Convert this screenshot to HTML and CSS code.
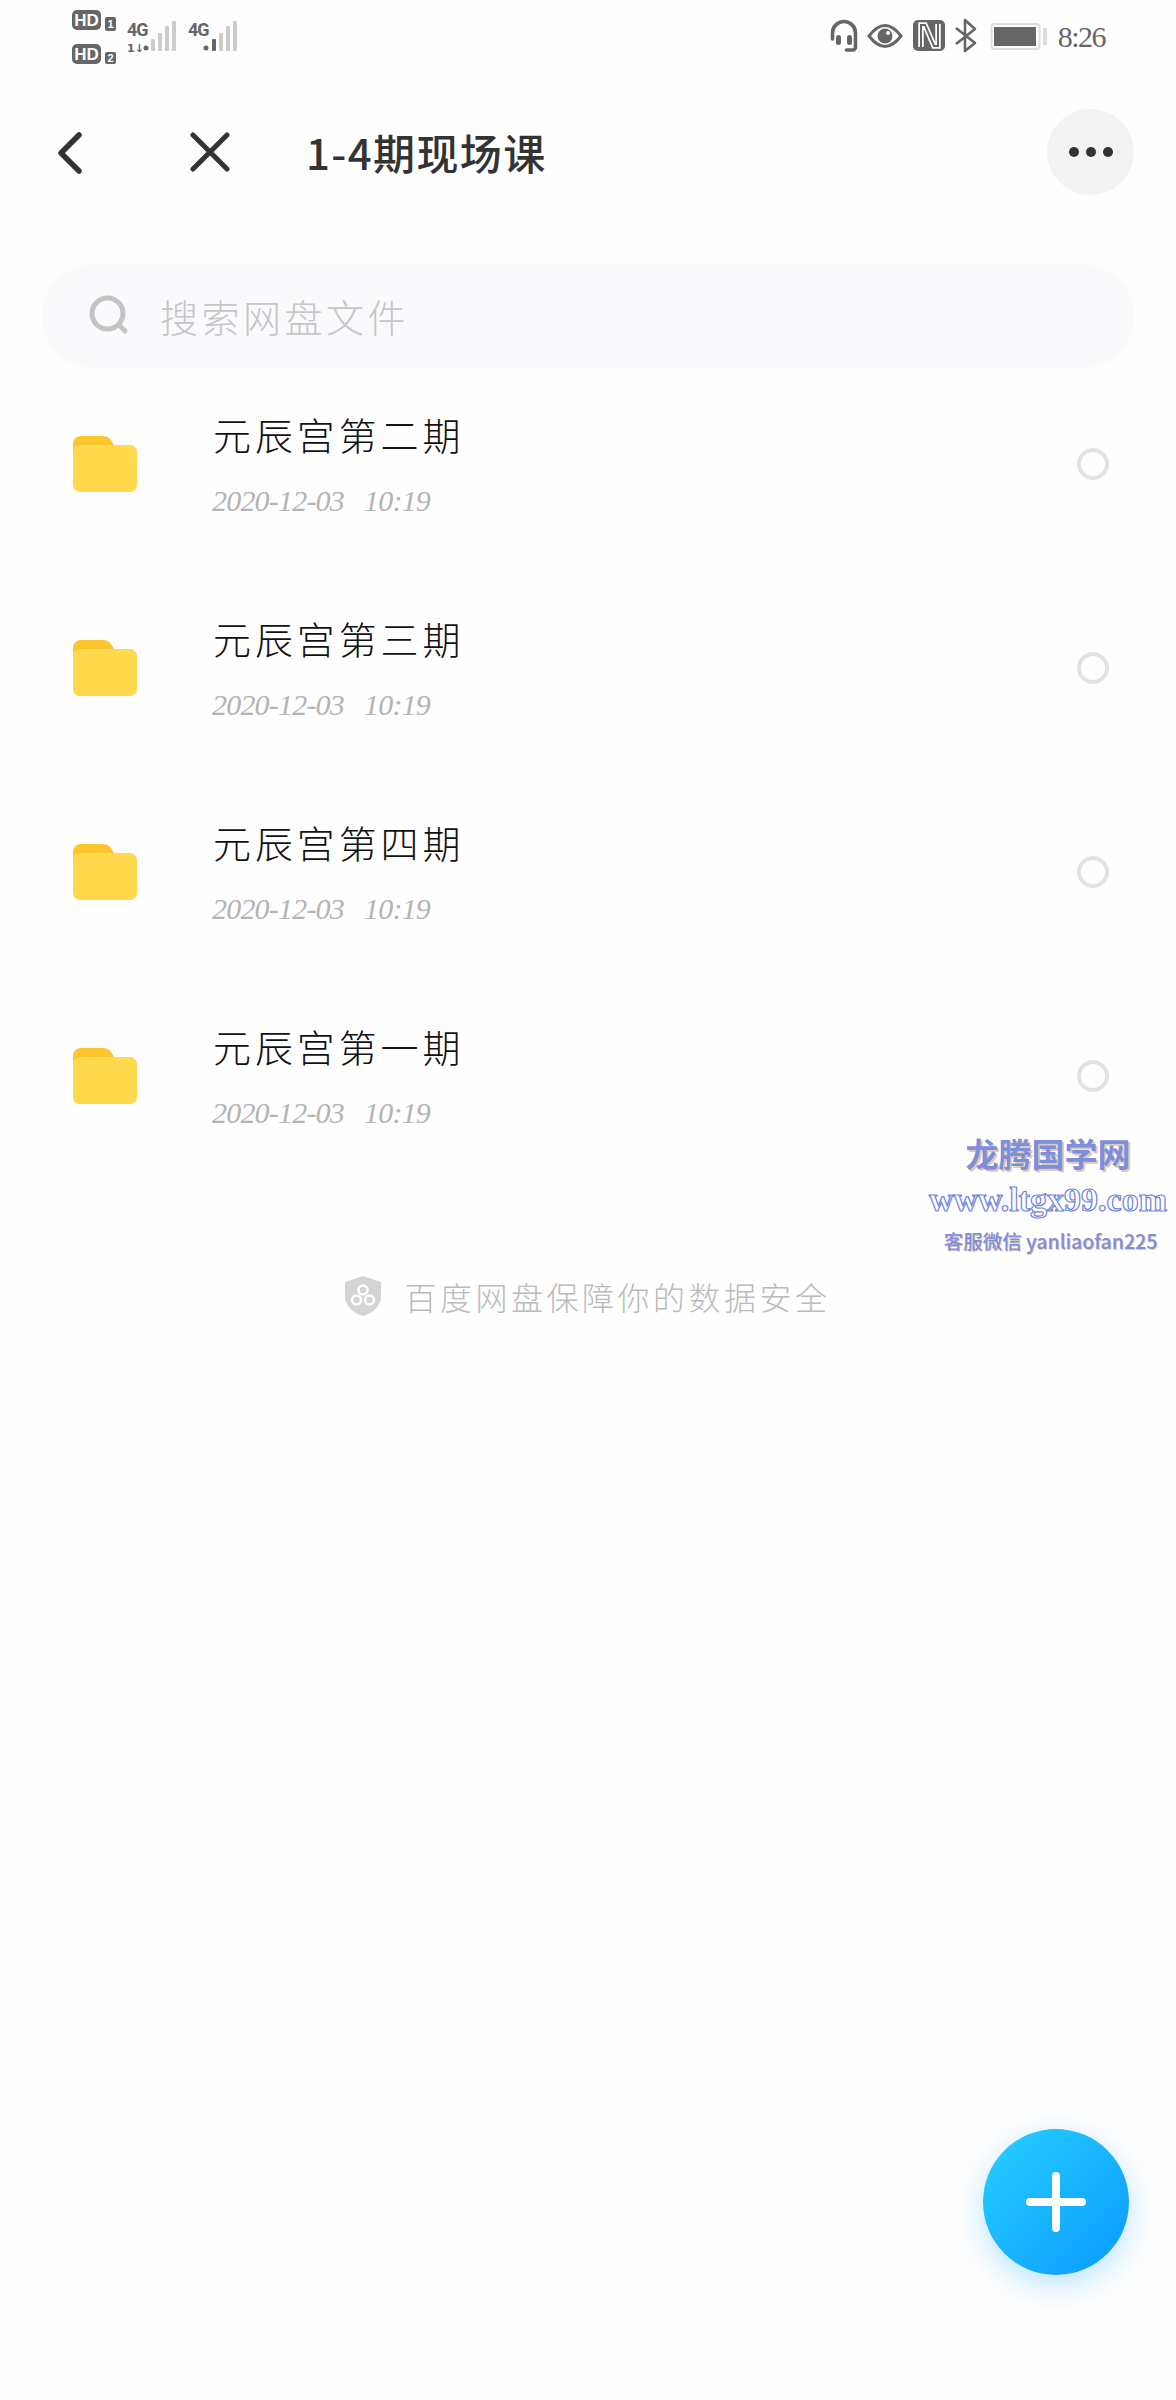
FILE: index.html
```html
<!DOCTYPE html>
<html lang="zh-CN">
<head>
<meta charset="utf-8">
<title>1-4期现场课</title>
<link rel="stylesheet" href="styles.css">
</head>
<body>
<div class="page">
  <header class="status">
    <svg class="status-left" width="170" height="70" viewBox="72 0 170 70">
      <rect x="72" y="10" width="29" height="20" rx="5" fill="#666"/>
      <text x="86.5" y="26" class="hd">HD</text>
      <rect x="105" y="17" width="11" height="14" rx="2" fill="#666"/>
      <text x="110.5" y="28" class="sim">1</text>
      <rect x="72" y="44" width="29" height="20" rx="5" fill="#666"/>
      <text x="86.5" y="60" class="hd">HD</text>
      <rect x="105" y="52" width="11" height="12" rx="2" fill="#666"/>
      <text x="110.5" y="62" class="sim">2</text>
      <text x="127" y="36" class="net">4G</text>
      <text x="127" y="52" class="arrows">1↓</text>
      <circle cx="146" cy="48" r="2.5" fill="#666"/>
      <rect x="151" y="39" width="4" height="12" rx="1" fill="#ccc"/>
      <rect x="158" y="33" width="4" height="18" rx="1" fill="#ccc"/>
      <rect x="165" y="26" width="4" height="25" rx="1" fill="#ccc"/>
      <rect x="172" y="21" width="4" height="30" rx="1" fill="#ccc"/>
      <text x="188" y="36" class="net">4G</text>
      <circle cx="206" cy="48" r="2.5" fill="#666"/>
      <rect x="212" y="39" width="4" height="12" rx="1" fill="#666"/>
      <rect x="219" y="33" width="4" height="18" rx="1" fill="#ccc"/>
      <rect x="226" y="26" width="4" height="25" rx="1" fill="#ccc"/>
      <rect x="233" y="21" width="4" height="30" rx="1" fill="#ccc"/>
    </svg>
    <div class="status-right">
      <svg width="220" height="70" viewBox="830 0 220 70">
        <path d="M832.500 39v-6a11.500 11.500 0 0 1 23 0v14a3 3 0 0 1-3 3h-6" fill="none" stroke="#666" stroke-width="3.600" stroke-linecap="round"/>
        <rect x="836" y="35" width="5" height="10" rx="2.500" fill="#666"/>
        <rect x="847" y="35" width="5" height="10" rx="2.500" fill="#666"/>
        <path d="M869 36Q885 15 901 36Q885 57 869 36Z" fill="none" stroke="#666" stroke-width="3"/>
        <circle cx="885" cy="36" r="7.500" fill="#666"/>
        <circle cx="888" cy="33" r="2" fill="#fff"/>
        <rect x="913" y="20" width="32" height="31" rx="5" fill="#666"/>
        <path d="M921 47V25h4L934 46h4V24" fill="none" stroke="#fff" stroke-width="5.500"/>
        <path d="M921 47V25h4L934 46h4V24" fill="none" stroke="#666" stroke-width="2"/>
        <path d="M956 28L975 43L965 51V20L975 29L956 44" fill="none" stroke="#666" stroke-width="2.600" stroke-linejoin="round"/>
        <rect x="991.500" y="24" width="48" height="25" rx="3" fill="#fff" stroke="#ddd" stroke-width="2"/>
        <rect x="994" y="27" width="42" height="19" fill="#666"/>
        <rect x="1043" y="28" width="4" height="17" rx="1" fill="#ddd"/>
      </svg>
      <span class="clock">8:26</span>
    </div>
  </header>

  <nav class="nav">
    <svg class="nav-back" width="24" height="42" viewBox="0 0 24 42">
      <path d="M21 3L3 21L21 39" fill="none" stroke="#333" stroke-width="5.500" stroke-linecap="round" stroke-linejoin="round"/>
    </svg>
    <svg class="nav-close" width="40" height="40" viewBox="0 0 40 40">
      <path d="M3 3L37 37M37 3L3 37" fill="none" stroke="#333" stroke-width="5" stroke-linecap="round"/>
    </svg>
    <h1 class="nav-title">1-4期现场课</h1>
    <button class="more" type="button" aria-label="更多"><i></i><i></i><i></i></button>
  </nav>

  <div class="search">
    <svg width="40" height="40" viewBox="0 0 40 40">
      <circle cx="18.500" cy="18.500" r="15.500" fill="none" stroke="#c4c4c6" stroke-width="5"/>
      <path d="M30 30L36 36" stroke="#c4c4c6" stroke-width="5" stroke-linecap="round"/>
    </svg>
    <span class="search-text">搜索网盘文件</span>
  </div>

  <ul class="list">
    <li class="row">
      <svg class="folder" width="64" height="56" viewBox="0 0 64 56">
        <path d="M0 8a8 8 0 0 1 8-8h22c5 0 8 3 11 9v10H0z" fill="#fdc52e"/>
        <rect y="9" width="64" height="47" rx="7" fill="#ffd84c"/>
      </svg>
      <div class="info"><div class="name">元辰宫第二期</div><div class="date">2020-12-03&nbsp;&nbsp;&nbsp;10:19</div></div>
      <span class="radio"></span>
    </li>
    <li class="row">
      <svg class="folder" width="64" height="56" viewBox="0 0 64 56">
        <path d="M0 8a8 8 0 0 1 8-8h22c5 0 8 3 11 9v10H0z" fill="#fdc52e"/>
        <rect y="9" width="64" height="47" rx="7" fill="#ffd84c"/>
      </svg>
      <div class="info"><div class="name">元辰宫第三期</div><div class="date">2020-12-03&nbsp;&nbsp;&nbsp;10:19</div></div>
      <span class="radio"></span>
    </li>
    <li class="row">
      <svg class="folder" width="64" height="56" viewBox="0 0 64 56">
        <path d="M0 8a8 8 0 0 1 8-8h22c5 0 8 3 11 9v10H0z" fill="#fdc52e"/>
        <rect y="9" width="64" height="47" rx="7" fill="#ffd84c"/>
      </svg>
      <div class="info"><div class="name">元辰宫第四期</div><div class="date">2020-12-03&nbsp;&nbsp;&nbsp;10:19</div></div>
      <span class="radio"></span>
    </li>
    <li class="row">
      <svg class="folder" width="64" height="56" viewBox="0 0 64 56">
        <path d="M0 8a8 8 0 0 1 8-8h22c5 0 8 3 11 9v10H0z" fill="#fdc52e"/>
        <rect y="9" width="64" height="47" rx="7" fill="#ffd84c"/>
      </svg>
      <div class="info"><div class="name">元辰宫第一期</div><div class="date">2020-12-03&nbsp;&nbsp;&nbsp;10:19</div></div>
      <span class="radio"></span>
    </li>
  </ul>

  <footer class="safe">
    <svg width="36" height="40" viewBox="0 0 36 40">
      <path d="M18 0L36 6V20C36 31 27 37 18 40C9 37 0 31 0 20V6Z" fill="#d4d4d4"/>
      <circle cx="18" cy="14" r="4.500" fill="none" stroke="#fff" stroke-width="2.600"/>
      <circle cx="11.500" cy="24" r="4.500" fill="none" stroke="#fff" stroke-width="2.600"/>
      <circle cx="24.500" cy="24" r="4.500" fill="none" stroke="#fff" stroke-width="2.600"/>
    </svg>
    <span class="safe-text">百度网盘保障你的数据安全</span>
  </footer>

  <aside class="mark">
    <div class="mark-title">龙腾国学网</div>
    <div class="mark-url">www.ltgx99.com</div>
    <div class="mark-contact">客服微信 yanliaofan225</div>
  </aside>

  <button class="fab" type="button" aria-label="新建">
    <svg width="60" height="60" viewBox="0 0 60 60">
      <path d="M30 4V56M4 30H56" stroke="#fff" stroke-width="8" stroke-linecap="round"/>
    </svg>
  </button>
</div>
</body>
</html>
```

FILE: styles.css
```css
* { box-sizing: border-box; }
html, body { margin: 0; padding: 0; background: #fff; }
body { font-family: "Noto Sans CJK SC", "Noto Sans", sans-serif; }
.page { position: relative; width: 1176px; height: 2400px; overflow: hidden; background: #fefefe; }

.status { display: flex; justify-content: space-between; height: 70px; padding: 0 71px 0 72px; }
.status-left { display: block; }
.status-right { display: flex; }
.status-right svg { display: block; margin-right: 8px; }
.hd { font: 700 17px "Liberation Sans", sans-serif; fill: #fff; text-anchor: middle; }
.sim { font: 700 11px "Liberation Sans", sans-serif; fill: #fff; text-anchor: middle; }
.net { font: 700 18px "Roboto", sans-serif; fill: #666; letter-spacing: -1px; }
.arrows { font: 700 11px "DejaVu Sans", sans-serif; fill: #666; }
.clock { font: 400 30px/74px "Liberation Serif", serif; color: #666; letter-spacing: -1.5px; }

.nav { display: flex; align-items: center; height: 86px; margin-top: 39px; padding: 0 42px 0 58px; }
.nav-back { flex: none; margin-right: 109px; margin-top: 1px; }
.nav-close { flex: none; margin-right: 76px; margin-left: -1px; }
.nav-title { margin: 0; flex: 1; font-size: 42px; line-height: 56px; font-weight: 500; color: #333; letter-spacing: 1.4px; }
.more { display: flex; align-items: center; justify-content: center; gap: 7px; width: 87px; height: 86px; padding: 0; border: 0; border-radius: 50%; background: #f3f3f3; }
.more i { display: block; width: 10px; height: 10px; border-radius: 50%; background: #333; }

.search { display: flex; align-items: center; gap: 31px; height: 104px; margin: 69px 42px 0; padding: 0 0 0 47px; border-radius: 52px; background: #fafafd; }
.search svg { flex: none; margin-top: -2px; }
.search-text { font-size: 38px; line-height: 50px; letter-spacing: 3.5px; color: #c6c6c8; font-weight: 300; }

.list { list-style: none; margin: 0; padding: 0; }
.row { display: flex; align-items: center; height: 204px; padding: 0 67px 12px 73px; }
.folder { flex: none; margin-right: 76px; }
.info { flex: 1; }
.name { font-size: 38px; line-height: 46px; letter-spacing: 3.9px; color: #111; font-weight: 300; }
.date { margin-top: 28px; margin-left: -1px; font: italic 400 30px/32px "Liberation Serif", serif; letter-spacing: -0.8px; color: #b4b4b4; }
.radio { flex: none; width: 32px; height: 32px; border: 4px solid #e2e2e2; border-radius: 50%; }

.safe { display: flex; align-items: center; justify-content: center; gap: 23px; height: 40px; margin-top: 92px; }
.safe-text { font-size: 32px; line-height: 40px; letter-spacing: 3.5px; color: #bbb; font-weight: 300; }

.mark { position: absolute; left: 920px; top: 1128px; width: 256px; text-align: center; color: #7d8fdc; }
.mark-title { font-size: 33px; line-height: 50px; font-weight: 700; text-shadow: 2px 2px 0 #dcc9b8; }
.mark-url { margin-top: 2px; font: 700 34px/40px "Liberation Serif", serif; color: #fff; -webkit-text-stroke: 1.2px #6f82dc; }
.mark-contact { margin-top: 1px; padding-left: 5px; font-size: 19.500px; line-height: 40px; font-weight: 500; text-shadow: 1px 1px 0 #dcc9b8; }

.fab { position: absolute; left: 983px; top: 2129px; display: flex; align-items: center; justify-content: center; width: 146px; height: 146px; padding: 0; border: 0; border-radius: 50%; background: linear-gradient(135deg, #27d0ff, #0a99ff); box-shadow: 0 10px 30px rgba(30, 170, 255, .3); }
.fab svg { display: block; }
```
